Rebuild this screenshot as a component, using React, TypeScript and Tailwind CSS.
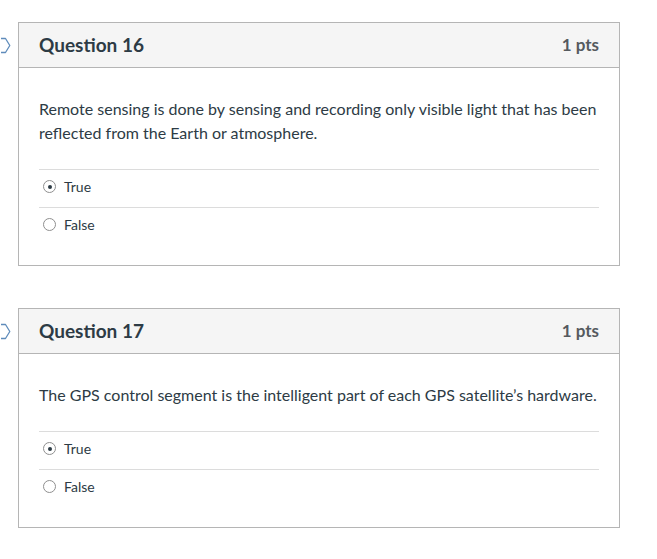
import React from 'react';

interface Question {
  id: number;
  points: number;
  text: string;
  answers: { label: string; selected: boolean }[];
}

const questions: Question[] = [
  {
    id: 16,
    points: 1,
    text: 'Remote sensing is done by sensing and recording only visible light that has been reflected from the Earth or atmosphere.',
    answers: [
      { label: 'True', selected: true },
      { label: 'False', selected: false },
    ],
  },
  {
    id: 17,
    points: 1,
    text: 'The GPS control segment is the intelligent part of each GPS satellite\u2019s hardware.',
    answers: [
      { label: 'True', selected: true },
      { label: 'False', selected: false },
    ],
  },
];

function FlagMarker() {
  return (
    <svg
      className="absolute left-[-18px] top-[14px]"
      width="11"
      height="17"
      viewBox="0 0 11 17"
      fill="none"
    >
      <path
        d="M0 1.5 H4.5 L8.8 8.5 L4.5 15.5 H0"
        stroke="#5f8cbb"
        strokeWidth="1.3"
        strokeLinejoin="round"
      />
    </svg>
  );
}

function Radio({ checked }: { checked: boolean }) {
  return (
    <span className="flex h-[13px] w-[13px] items-center justify-center rounded-full border border-[#8f8f8f] bg-white">
      {checked && <span className="h-[4px] w-[4px] rounded-full bg-[#2d3b45]" />}
    </span>
  );
}

function QuestionCard({ q }: { q: Question }) {
  return (
    <div className="relative border border-[#b5b5b5] bg-white">
      <FlagMarker />
      {/* Header */}
      <div className="flex h-[45px] items-center justify-between border-b border-[#b5b5b5] bg-[#f5f5f5] px-5">
        <h2 className="text-[19px] font-bold text-[#2d3b45]">Question {q.id}</h2>
        <span className="text-[17px] font-bold text-[#555a5f]">{q.points} pts</span>
      </div>
      {/* Body */}
      <div className="px-5 pb-5 pt-[29px]">
        <p className="text-[16px] leading-[24px] text-[#2d3b45]">{q.text}</p>
        <div className="mt-[24px]">
          {q.answers.map((a) => (
            <div
              key={a.label}
              className="flex h-[38px] items-center gap-[8px] border-t border-[#dcdcdc] pb-[4px] pl-[4px]"
            >
              <Radio checked={a.selected} />
              <span className="text-[14px] text-[#2d3b45]">{a.label}</span>
            </div>
          ))}
        </div>
      </div>
    </div>
  );
}

export default function App() {
  return (
    <div
      className="min-h-[559px] w-[657px] bg-white pl-[18px] pt-[22px]"
      style={{ fontFamily: 'Lato, "Open Sans", sans-serif' }}
    >
      <div className="flex w-[602px] flex-col gap-[42px]">
        {questions.map((q) => (
          <QuestionCard key={q.id} q={q} />
        ))}
      </div>
    </div>
  );
}
